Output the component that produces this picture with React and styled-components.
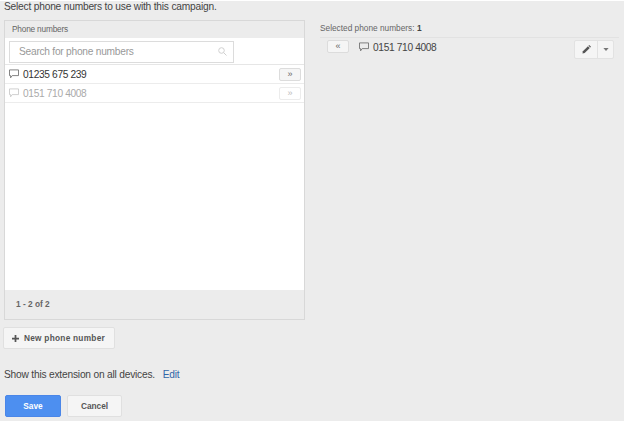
import React from 'react'
import styled, { createGlobalStyle } from 'styled-components'

const GlobalStyle = createGlobalStyle`
  html, body {
    margin: 0;
    padding: 0;
    background: #fff;
    overflow: hidden;
  }
  body {
    font-family: 'Liberation Sans', Arial, sans-serif;
  }
`

const Stage = styled.div`
  width: 624px;
  height: 420px;
  margin-top: 1px;
  padding-left: 4px;
  box-sizing: border-box;
  background: #ececec;
  overflow: hidden;
  display: flex;
  flex-direction: column;
`

const Intro = styled.div`
  font-size: 10.2px;
  letter-spacing: -0.2px;
  line-height: 11px;
  color: #444;
  height: 19px;
`

const Columns = styled.div`
  display: flex;
  align-items: flex-start;
`

const Panel = styled.div`
  width: 301px;
  height: 300px;
  box-sizing: border-box;
  border: 1px solid #d8d8d8;
  display: flex;
  flex-direction: column;
  background: #fff;
`

const PanelHeader = styled.div`
  height: 17px;
  background: #ececec;
  color: #666;
  font-size: 8.3px;
  letter-spacing: -0.2px;
  line-height: 17px;
  padding-left: 7px;
`

const SearchRow = styled.div`
  height: 27px;
  box-sizing: border-box;
  padding: 3px 0 0 4px;
  border-bottom: 1px solid #e6e6e6;
`

const SearchBox = styled.div`
  width: 225px;
  height: 22px;
  box-sizing: border-box;
  border: 1px solid #dcdcdc;
  display: flex;
  align-items: center;
  justify-content: space-between;
  padding: 0 6px 2px 9px;
  color: #999;
  font-size: 10.2px;
  letter-spacing: -0.25px;
`

const NumberList = styled.div`
  flex: 1;
`

const NumberRow = styled.div`
  height: 19px;
  box-sizing: border-box;
  display: flex;
  align-items: center;
  justify-content: space-between;
  padding: 0 3px 0 4px;
  border-bottom: 1px solid #ececec;
  color: ${(props) => (props.$muted ? '#aaa' : '#333')};
`

const NumberLabel = styled.span`
  display: flex;
  align-items: center;
  gap: 4px;
  font-size: 10.2px;
  letter-spacing: -0.35px;
`

const ChatMark = styled.span`
  display: flex;
  color: ${(props) => (props.$muted ? '#c4c4c4' : '#666')};
`

const ArrowButton = styled.span`
  width: 22px;
  height: 13px;
  box-sizing: border-box;
  border: 1px solid ${(props) => (props.$muted ? '#ececec' : '#dcdcdc')};
  border-radius: 2px;
  background: ${(props) => (props.$muted ? '#fff' : '#f5f5f5')};
  color: ${(props) => (props.$muted ? '#bbb' : '#666')};
  font-size: 9px;
  line-height: 10px;
  text-align: center;
`

const PanelFooter = styled.div`
  height: 29px;
  background: #ececec;
  color: #666;
  font-size: 8.3px;
  font-weight: bold;
  line-height: 29px;
  padding-left: 11px;
`

const SelectedColumn = styled.div`
  width: 299px;
  margin-left: 15px;
  padding-top: 2px;
`

const SelectedTitle = styled.div`
  height: 16px;
  box-sizing: border-box;
  border-bottom: 1px solid #e2e2e2;
  color: #666;
  font-size: 8.3px;
  line-height: 12px;
  b {
    color: #444;
  }
`

const SelectedRow = styled.div`
  display: flex;
  align-items: flex-start;
  padding: 2px 5px 0 7px;
`

const SelectedNumber = styled(NumberLabel)`
  margin-left: 10px;
  color: #444;
  flex: 1;
  height: 14px;
`

const SplitButton = styled.div`
  display: flex;
  height: 19px;
  box-sizing: border-box;
  border: 1px solid #e2e2e2;
  border-radius: 2px;
  background: #f5f5f5;
`

const SplitPart = styled.span`
  width: ${(props) => props.$width}px;
  display: flex;
  align-items: center;
  justify-content: center;
  & + & {
    border-left: 1px solid #e2e2e2;
  }
`

const NewButton = styled.div`
  width: 112px;
  height: 22px;
  box-sizing: border-box;
  margin: 7px 0 0 -1px;
  border: 1px solid #e0e0e0;
  border-radius: 2px;
  background: #f5f5f5;
  color: #555;
  font-size: 8.3px;
  font-weight: bold;
  letter-spacing: 0.25px;
  display: flex;
  align-items: center;
  gap: 5px;
  padding-left: 8px;
`

const DevicesLine = styled.div`
  margin-top: 20px;
  height: 12px;
  font-size: 10.2px;
  letter-spacing: -0.2px;
  line-height: 12px;
  color: #444;
  a {
    color: #3366a8;
    margin-left: 5px;
  }
`

const Actions = styled.div`
  display: flex;
  gap: 6px;
  margin: 14px 0 0 1px;
`

const ActionButton = styled.div`
  width: ${(props) => props.$width}px;
  height: 22px;
  box-sizing: border-box;
  border: 1px solid ${(props) => (props.$primary ? '#4a86e8' : '#e0e0e0')};
  border-radius: 2px;
  background: ${(props) => (props.$primary ? '#4d8ff0' : '#f5f5f5')};
  color: ${(props) => (props.$primary ? '#fff' : '#555')};
  font-size: 8.3px;
  font-weight: bold;
  line-height: 20px;
  text-align: center;
`

const ChatIcon = () => (
  <svg width="10" height="10" viewBox="0 0 10 10" fill="none" stroke="currentColor" strokeWidth="0.8">
    <path d="M0.5 0.9H9.5V6.6H3.2L1.6 8.8V6.6H0.5Z" />
  </svg>
)

const SearchIcon = () => (
  <svg width="9" height="9" viewBox="0 0 9 9" fill="none" stroke="#d0d0d0" strokeWidth="1">
    <circle cx="3.5" cy="3.5" r="2.8" />
    <path d="M5.6 5.6L8.5 8.5" />
  </svg>
)

const PencilIcon = () => (
  <svg width="9" height="9" viewBox="0 0 10 10" fill="#555">
    <path d="M0.5 9.5L1 7L6.6 1.4L8.6 3.4L3 9Z" />
    <path d="M7.2 0.8L8 0L10 2L9.2 2.8Z" />
  </svg>
)

const CaretIcon = () => (
  <svg width="6" height="3" viewBox="0 0 7 4" fill="#777">
    <path d="M0 0H7L3.5 4Z" />
  </svg>
)

const PlusIcon = () => (
  <svg width="7" height="7" viewBox="0 0 8 8" fill="#555">
    <path d="M3 0H5V3H8V5H5V8H3V5H0V3H3Z" />
  </svg>
)

export default function App() {
  return (
    <Stage>
      <GlobalStyle />
      <Intro>Select phone numbers to use with this campaign.</Intro>
      <Columns>
        <Panel>
          <PanelHeader>Phone numbers</PanelHeader>
          <SearchRow>
            <SearchBox>
              Search for phone numbers
              <SearchIcon />
            </SearchBox>
          </SearchRow>
          <NumberList>
            <NumberRow>
              <NumberLabel>
                <ChatMark>
                  <ChatIcon />
                </ChatMark>
                01235 675 239
              </NumberLabel>
              <ArrowButton>»</ArrowButton>
            </NumberRow>
            <NumberRow $muted>
              <NumberLabel>
                <ChatMark $muted>
                  <ChatIcon />
                </ChatMark>
                0151 710 4008
              </NumberLabel>
              <ArrowButton $muted>»</ArrowButton>
            </NumberRow>
          </NumberList>
          <PanelFooter>1 - 2 of 2</PanelFooter>
        </Panel>
        <SelectedColumn>
          <SelectedTitle>
            Selected phone numbers: <b>1</b>
          </SelectedTitle>
          <SelectedRow>
            <ArrowButton>«</ArrowButton>
            <SelectedNumber>
              <ChatMark>
                <ChatIcon />
              </ChatMark>
              0151 710 4008
            </SelectedNumber>
            <SplitButton>
              <SplitPart $width={22}>
                <PencilIcon />
              </SplitPart>
              <SplitPart $width={15}>
                <CaretIcon />
              </SplitPart>
            </SplitButton>
          </SelectedRow>
        </SelectedColumn>
      </Columns>
      <NewButton>
        <PlusIcon />
        New phone number
      </NewButton>
      <DevicesLine>
        Show this extension on all devices. <a>Edit</a>
      </DevicesLine>
      <Actions>
        <ActionButton $primary $width={56}>Save</ActionButton>
        <ActionButton $width={55}>Cancel</ActionButton>
      </Actions>
    </Stage>
  )
}
